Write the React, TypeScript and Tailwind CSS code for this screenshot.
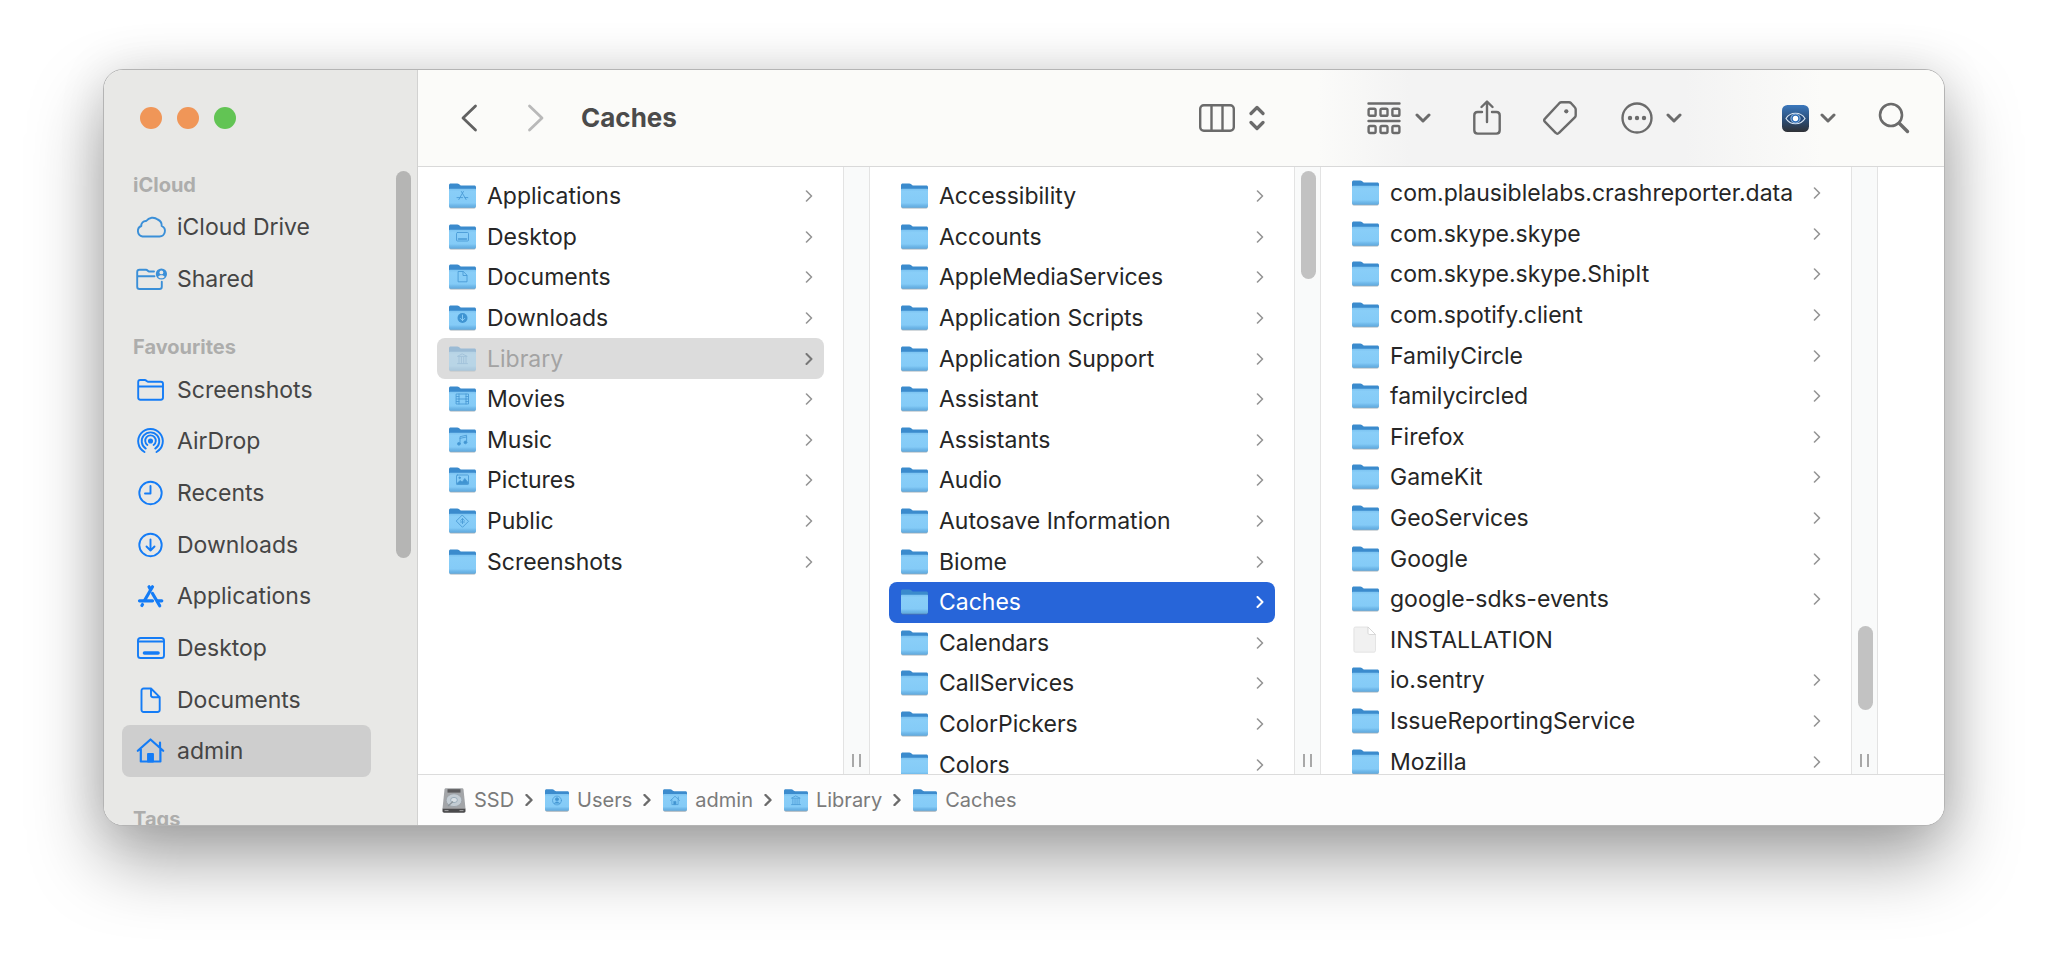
import type { ReactNode } from "react";

type Glyph =
  | "apps"
  | "desktop"
  | "document"
  | "download"
  | "library"
  | "movies"
  | "music"
  | "pictures"
  | "public"
  | "user"
  | "home";

type Entry = {
  name: string;
  glyph?: Glyph;
  kind?: "folder" | "file";
  state?: "parent" | "selected";
};

const homeEntries: Entry[] = [
  { name: "Applications", glyph: "apps" },
  { name: "Desktop", glyph: "desktop" },
  { name: "Documents", glyph: "document" },
  { name: "Downloads", glyph: "download" },
  { name: "Library", glyph: "library", state: "parent" },
  { name: "Movies", glyph: "movies" },
  { name: "Music", glyph: "music" },
  { name: "Pictures", glyph: "pictures" },
  { name: "Public", glyph: "public" },
  { name: "Screenshots" },
];

const libraryEntries: Entry[] = [
  { name: "Accessibility" },
  { name: "Accounts" },
  { name: "AppleMediaServices" },
  { name: "Application Scripts" },
  { name: "Application Support" },
  { name: "Assistant" },
  { name: "Assistants" },
  { name: "Audio" },
  { name: "Autosave Information" },
  { name: "Biome" },
  { name: "Caches", state: "selected" },
  { name: "Calendars" },
  { name: "CallServices" },
  { name: "ColorPickers" },
  { name: "Colors" },
];

const cacheEntries: Entry[] = [
  { name: "com.plausiblelabs.crashreporter.data" },
  { name: "com.skype.skype" },
  { name: "com.skype.skype.ShipIt" },
  { name: "com.spotify.client" },
  { name: "FamilyCircle" },
  { name: "familycircled" },
  { name: "Firefox" },
  { name: "GameKit" },
  { name: "GeoServices" },
  { name: "Google" },
  { name: "google-sdks-events" },
  { name: "INSTALLATION", kind: "file" },
  { name: "io.sentry" },
  { name: "IssueReportingService" },
  { name: "Mozilla" },
];

const pathEntries: { name: string; glyph?: Glyph; disk?: boolean }[] = [
  { name: "SSD", disk: true },
  { name: "Users", glyph: "user" },
  { name: "admin", glyph: "home" },
  { name: "Library", glyph: "library" },
  { name: "Caches" },
];

const glyphs: Record<Glyph, ReactNode> = {
  apps: <path d="M14.4 8.5 9.8 16.6M12.4 8.5l4.7 8.1M8 14.6h5.5M15.8 14.6h3" />,
  desktop: (
    <>
      <rect x="7.5" y="8.5" width="12" height="8.5" rx="1" />
      <path d="M9.5 15h8" strokeWidth="1.6" />
    </>
  ),
  document: <path d="M9.5 7.5h4.8l3.7 3.7v6.6H9.5zM14 7.8v3.7h3.8" />,
  download: (
    <>
      <circle cx="13.5" cy="13" r="5" fill="#3f94d2" stroke="none" />
      <path d="M13.5 10v5.5M11.3 13.4l2.2 2.2 2.2-2.2" stroke="#8fd0f8" />
    </>
  ),
  library: (
    <>
      <path d="M8.8 10.4h9.4L13.5 8zM8.5 17.6h10" />
      <path d="M10 11v6M12.4 11v6M14.7 11v6M17 11v6" />
    </>
  ),
  movies: (
    <path d="M7.5 8h12v10h-12zM10 8v10M17 8v10M10 13h7M7.5 10.5H10M7.5 13H10M7.5 15.5H10M17 10.5h2.5M17 13h2.5M17 15.5h2.5" />
  ),
  music: (
    <>
      <path d="M11 16.5V9.7l6.6-1.5v7M11 11.4l6.6-1.5" />
      <circle cx="9.9" cy="16.8" r="1.4" fill="#3f94d2" />
      <circle cx="16.4" cy="15.4" r="1.4" fill="#3f94d2" />
    </>
  ),
  pictures: (
    <>
      <rect x="7.5" y="8" width="12" height="9.5" rx="0.8" />
      <path d="m8 16.5 3.2-3 2 1.6 2.6-3.6 3.4 4.2v1.3H8z" fill="#3f94d2" />
      <circle cx="10.6" cy="10.8" r="0.8" fill="#3f94d2" />
    </>
  ),
  public: (
    <path d="m13.5 7.3 6 6-6 6-6-6zM13.5 10.6v5M11.8 12.4l1.7-1.8 1.7 1.8M11.6 14h3.8" />
  ),
  user: (
    <>
      <circle cx="13.5" cy="13" r="5" />
      <circle cx="13.5" cy="11.6" r="1.8" fill="#3f94d2" />
      <path d="M10.3 16.4c1.4-2.4 5-2.4 6.4 0" fill="#3f94d2" />
    </>
  ),
  home: (
    <>
      <path d="m8.4 13 5.1-4.8 5.1 4.8M10 12.4V17.6h7V12.4M17.2 9v2" />
      <path d="M12.4 14h2.2v3.6h-2.2z" fill="#3f94d2" />
    </>
  ),
};

function FolderIcon({ glyph, className = "h-[26px] w-[27px]" }: { glyph?: Glyph; className?: string }) {
  return (
    <svg viewBox="0 0 27 26" preserveAspectRatio="none" className={`${className} shrink-0`} aria-hidden="true">
      <defs>
        <linearGradient id="folder-front" x1="0" y1="0" x2="0" y2="1">
          <stop offset="0" stopColor="#7cc3f1" />
          <stop offset="0.15" stopColor="#89cef8" />
          <stop offset="0.75" stopColor="#84cbf7" />
          <stop offset="0.86" stopColor="#70b9ea" />
          <stop offset="1" stopColor="#60a9dd" />
        </linearGradient>
      </defs>
      <rect x="0.4" y="12" width="26.2" height="13.6" rx="1.6" fill="#6d7f8c" opacity="0.6" />
      <path d="M0 2.2C0 1 .7.4 1.8.4h6.4c.9 0 1.400.3 2 .8l.9.9c.4.4.8.5 1.500.5h12.600c1.200 0 1.800.6 1.800 1.800V12H0z" fill="#3b8bcd" />
      <path d="M0 6.600c0-.6.3-.9.9-.9h25.200c.6 0 .9.3.9.9v16.300c0 1-.7 1.800-1.800 1.800H1.800C.7 24.700 0 23.900 0 22.900z" fill="url(#folder-front)" />
      {glyph && (
        <g fill="none" stroke="#4a9bd6" strokeWidth="0.9" strokeLinecap="round" strokeLinejoin="round">
          {glyphs[glyph]}
        </g>
      )}
    </svg>
  );
}

function FileIcon() {
  return (
    <svg viewBox="0 0 27 28" className="h-7 w-[27px] shrink-0" aria-hidden="true">
      <path d="M3.500 1h12.500l7.500 7.500v16c0 1-.6 1.700-1.600 1.700H3.500c-1 0-1.600-.7-1.600-1.700V2.700C1.900 1.700 2.500 1 3.500 1z" fill="#f1f1f1" stroke="#dedede" strokeWidth="0.8" />
      <path d="M16 1v5.800c0 1.100.6 1.700 1.700 1.700h5.800z" fill="#fff" stroke="#cfcfcf" strokeWidth="0.8" />
    </svg>
  );
}

function DiskIcon() {
  return (
    <svg viewBox="0 0 24 25" className="h-[25px] w-6 shrink-0" aria-hidden="true">
      <path d="M2.500 1.500C2.700.6 3.200.3 4 .3h16c.8 0 1.300.3 1.500 1.200L23.500 20.500H.5z" fill="#a3a5a8" />
      <path d="M.5 20.500h23v2.800c0 .8-.6 1.400-1.600 1.400H2.100c-1 0-1.600-.6-1.600-1.400z" fill="#4a4a4c" />
      <rect x="5.500" y="1.200" width="13" height="3.400" fill="#5b5b5d" />
      <ellipse cx="12" cy="12.200" rx="7.800" ry="6.400" fill="#c3ccd3" stroke="#9aa1a7" strokeWidth="0.8" />
      <ellipse cx="12" cy="12" rx="3.400" ry="2.600" fill="#d9e0e5" stroke="#8fa3b3" strokeWidth="0.8" />
      <path d="m6 18 5-4.500" stroke="#8b949a" strokeWidth="1.200" />
      <path d="M2.500 22.600h4M17.500 22.600h4" stroke="#a4a4a6" strokeWidth="1" />
    </svg>
  );
}

function Chevron({ className }: { className: string }) {
  return (
    <svg viewBox="0 0 8 12" className={`h-3 w-2 shrink-0 ${className}`} fill="none" stroke="currentColor" strokeLinecap="round" strokeLinejoin="round" aria-hidden="true">
      <path d="M1.500 1 6.500 6l-5 5" />
    </svg>
  );
}

function DownChevron() {
  return (
    <svg viewBox="0 0 16 10" className="h-[10px] w-4" fill="none" stroke="currentColor" strokeWidth="3" strokeLinecap="round" strokeLinejoin="round" aria-hidden="true">
      <path d="m2 2 6 6 6-6" />
    </svg>
  );
}

function SidebarIcon({ color, children }: { color: string; children: ReactNode }) {
  return (
    <svg viewBox="0 0 32 28" className={`h-7 w-8 shrink-0 ${color}`} fill="none" stroke="currentColor" strokeWidth="1.9" strokeLinecap="round" strokeLinejoin="round" aria-hidden="true">
      {children}
    </svg>
  );
}

const cloudItems = [
  {
    name: "iCloud Drive",
    icon: <path d="M7.500 23.500h17a5.500 5.500 0 0 0 2.200-10.500 6.500 6.500 0 0 0-4-6.500 8 8 0 0 0-11.500 1.500 4.500 4.500 0 0 0-4.900 5 5.500 5.500 0 0 0 1.200 10.500z" />,
  },
  {
    name: "Shared",
    icon: (
      <>
        <path d="M19 6.500h-5c-1 0-1.500-1.800-3-1.800H4.500c-1.500 0-2.300.8-2.300 2.300v14.700c0 1.500.8 2.300 2.300 2.300h20c1.500 0 2.300-.8 2.300-2.300v-5M2.500 11.200h17" />
        <circle cx="26.400" cy="9" r="5.600" fill="currentColor" stroke="none" />
        <circle cx="26.400" cy="7.400" r="1.900" fill="#e8e8e6" stroke="none" />
        <path d="M23.100 12c.8-2.400 5.800-2.400 6.600 0-1.600 1.700-5 1.700-6.600 0z" fill="#e8e8e6" stroke="none" />
      </>
    ),
  },
];

const favouriteItems = [
  {
    name: "Screenshots",
    icon: <path d="M3.200 21.500V6c0-1.300.8-2 2-2h4.600c1.500 0 2.200 1.800 3.400 1.800h12.600c1.400 0 2.200.8 2.200 2.200v13.500c0 1.400-.8 2.200-2.200 2.200H5.400c-1.400 0-2.200-.8-2.200-2.200zM3.500 10.500h24.200" />,
  },
  {
    name: "AirDrop",
    icon: (
      <>
        <path d="M9.500 25a12.300 12.300 0 1 1 12 0M10.800 21.600a8.800 8.800 0 1 1 9.400 0M12.400 18a5.300 5.300 0 1 1 6.200 0" />
        <circle cx="15.500" cy="14" r="1.600" fill="currentColor" />
      </>
    ),
  },
  {
    name: "Recents",
    icon: (
      <>
        <circle cx="15.500" cy="14" r="11.200" />
        <path d="M15.500 7v7.500H10" />
      </>
    ),
  },
  {
    name: "Downloads",
    icon: (
      <>
        <circle cx="15.500" cy="14" r="11.200" />
        <path d="M15.500 8.500v11M11.500 15.500l4 4 4-4" />
      </>
    ),
  },
  {
    name: "Applications",
    icon: (
      <>
        <path d="M17.500 4.800 9.700 18.300M14 4.800l1.500 2.600M17.500 11.500l7.200 12.300" strokeWidth="3.200" />
        <path d="M4.500 18.800h13M22.500 18.800h4.300M7.500 22.500l-.6 1" strokeWidth="3.200" />
      </>
    ),
  },
  {
    name: "Desktop",
    icon: (
      <>
        <rect x="3" y="4" width="26" height="20" rx="2.600" />
        <path d="M3.500 7.500h25" />
        <path d="M9.500 19h13.500" strokeWidth="3.600" />
      </>
    ),
  },
  {
    name: "Documents",
    icon: <path d="M8.700 2.500H16l8.700 8.700v12.600c0 1.400-.8 2.200-2.200 2.200H8.700c-1.400 0-2.200-.8-2.200-2.200V4.700c0-1.400.8-2.200 2.200-2.200zM16 2.800v6.200c0 1.400.8 2.200 2.200 2.200h6.200" />,
  },
  {
    name: "admin",
    icon: (
      <>
        <path d="M2.800 13.800 15.500 2.500 28.200 13.800M5.800 12v12.500h19.600V12M25 5.500v5" strokeWidth="2.200" />
        <path d="M13 17h5v7.500h-5z" fill="currentColor" />
      </>
    ),
  },
];

function SidebarHeading({ children }: { children: ReactNode }) {
  return <h2 className="pl-[11px] text-[20px] leading-6 font-bold text-[#adadac]">{children}</h2>;
}

function SidebarItem({ name, icon, color, active }: { name: string; icon: ReactNode; color: string; active?: boolean }) {
  return (
    <li className="min-h-0">
      <a
        href="#"
        aria-current={active ? "page" : undefined}
        className={`flex h-full items-center gap-[10px] rounded-lg pl-[13px] text-[23px] leading-7 text-[#454545] ${active ? "bg-[#cecece]" : ""}`}
      >
        <SidebarIcon color={color}>{icon}</SidebarIcon>
        {name}
      </a>
    </li>
  );
}

function Sidebar() {
  return (
    <aside className="relative flex w-[314px] shrink-0 flex-col overflow-hidden border-r border-[#d2d2d1] bg-[#e8e8e6] pr-[46px] pl-[18px]">
      <div className="flex gap-[15px] pt-[37px] pl-[18px]">
        <button type="button" aria-label="Close" className="size-[22px] rounded-full bg-[#f09658]" />
        <button type="button" aria-label="Minimise" className="size-[22px] rounded-full bg-[#f09658]" />
        <button type="button" aria-label="Zoom" className="size-[22px] rounded-full bg-[#62c454]" />
      </div>
      <nav className="mt-11">
        <SidebarHeading>iCloud</SidebarHeading>
        <ul className="mt-1 grid h-[104px] auto-rows-fr">
          {cloudItems.map((item) => (
            <SidebarItem key={item.name} {...item} color="text-[#3a8fd8]" />
          ))}
        </ul>
        <div className="mt-[30px]">
          <SidebarHeading>Favourites</SidebarHeading>
        </div>
        <ul className="mt-[5px] grid h-[413px] auto-rows-fr">
          {favouriteItems.map((item) => (
            <SidebarItem key={item.name} {...item} color="text-[#147cf6]" active={item.name === "admin"} />
          ))}
        </ul>
        <div className="mt-[30px]">
          <SidebarHeading>Tags</SidebarHeading>
        </div>
      </nav>
      <div className="absolute top-[101px] right-[6px] h-[387px] w-[15px] rounded-full bg-[#b5b5b4]" />
    </aside>
  );
}

function Toolbar() {
  return (
    <header className="flex h-[97px] shrink-0 items-center border-b border-[#d9d9d9] bg-[linear-gradient(to_right,#fbfbf9_59%,#f3f3f3_65%,#f3f3f3_83%,#fbfbf9_92%)] pr-[34px] pl-[42px] text-[#6b6b6b]">
      <button type="button" aria-label="Back">
        <svg viewBox="0 0 18 28" className="h-7 w-[18px]" fill="none" stroke="#626262" strokeWidth="2.8" strokeLinecap="round" strokeLinejoin="round">
          <path d="M15.500 2 3 14l12.500 12" />
        </svg>
      </button>
      <button type="button" aria-label="Forward" className="ml-[49px]">
        <svg viewBox="0 0 18 28" className="h-7 w-[18px]" fill="none" stroke="#b9b9b9" strokeWidth="2.8" strokeLinecap="round" strokeLinejoin="round">
          <path d="M2.500 2 15 14 2.500 26" />
        </svg>
      </button>
      <h1 className="ml-9 text-[26px] leading-8 font-bold text-[#4b4b4b]">Caches</h1>

      <div className="ml-auto flex items-center gap-[42px]">
        <button type="button" aria-label="View as columns" className="mr-[60px] flex items-center gap-[14px]">
          <svg viewBox="0 0 36 28" className="h-7 w-9" fill="none" stroke="currentColor" strokeWidth="2.4">
            <rect x="1.200" y="1.200" width="33.600" height="25.600" rx="3.600" />
            <path d="M12.500 1v26M23.500 1v26" />
          </svg>
          <svg viewBox="0 0 16 26" className="h-[26px] w-4" fill="none" stroke="currentColor" strokeWidth="3.2" strokeLinecap="round" strokeLinejoin="round">
            <path d="m2 8.500 6-6 6 6M2 17.500l6 6 6-6" />
          </svg>
        </button>
        <button type="button" aria-label="Group" className="flex items-center gap-[14px]">
          <svg viewBox="0 0 34 34" className="size-[34px]" fill="none" stroke="currentColor" strokeWidth="2.4" strokeLinecap="round">
            <path d="M1.500 2.500h31M1.500 20h31" />
            <rect x="1.600" y="7.800" width="7" height="7" rx="1.400" />
            <rect x="13.500" y="7.800" width="7" height="7" rx="1.400" />
            <rect x="25.400" y="7.800" width="7" height="7" rx="1.400" />
            <rect x="1.600" y="25" width="7" height="7" rx="1.400" />
            <rect x="13.500" y="25" width="7" height="7" rx="1.400" />
            <rect x="25.400" y="25" width="7" height="7" rx="1.400" />
          </svg>
          <DownChevron />
        </button>
        <button type="button" aria-label="Share">
          <svg viewBox="0 0 28 36" className="h-9 w-7" fill="none" stroke="currentColor" strokeWidth="2.4" strokeLinecap="round" strokeLinejoin="round">
            <path d="M9 12H4.600c-2.200 0-3.300 1.100-3.300 3.300v15c0 2.200 1.100 3.300 3.300 3.300h18.800c2.200 0 3.300-1.100 3.300-3.300v-15c0-2.200-1.100-3.300-3.300-3.300H19M14 22V1.800M8.500 7 14 1.500 19.500 7" />
          </svg>
        </button>
        <button type="button" aria-label="Tags" className="mr-[2px]">
          <svg viewBox="0 0 34 34" className="size-[34px]" fill="none" stroke="currentColor" strokeWidth="2.4" strokeLinejoin="round">
            <path d="M18.500 1.300h7.400c.9 0 1.600.3 2.200.9l3.700 4.100c.6.600.9 1.300.9 2.200v5.700c0 .9-.3 1.600-.9 2.200L16 31.800c-1.100 1.200-2.200 1.200-3.300 0L2 20.900c-1.100-1.100-1.100-2.200 0-3.300L16.300 2.200c.6-.6 1.300-.9 2.200-.9z" />
            <circle cx="23.300" cy="10.300" r="2.100" fill="currentColor" stroke="none" />
          </svg>
        </button>
        <button type="button" aria-label="More" className="flex items-center gap-[13px]">
          <svg viewBox="0 0 32 32" className="size-8" fill="none" stroke="currentColor" strokeWidth="2.4">
            <circle cx="16" cy="16" r="14.500" />
            <g fill="currentColor" stroke="none">
              <circle cx="9" cy="16" r="2.200" />
              <circle cx="16" cy="16" r="2.200" />
              <circle cx="23" cy="16" r="2.200" />
            </g>
          </svg>
          <DownChevron />
        </button>
        <button type="button" aria-label="Preview app" className="ml-[58px] flex items-center gap-[11px]">
          <svg viewBox="0 0 27 27" className="size-[27px]" aria-hidden="true">
            <defs>
              <linearGradient id="eye-bg" x1="0" y1="0" x2="0" y2="1">
                <stop offset="0" stopColor="#3b78bd" />
                <stop offset="0.55" stopColor="#2b4e77" />
                <stop offset="1" stopColor="#303236" />
              </linearGradient>
            </defs>
            <rect width="27" height="27" rx="5.500" fill="url(#eye-bg)" />
            <path d="M4 13.500c4.200-7 14.800-7 19 0-4.200 7-14.800 7-19 0z" fill="#254c7c" stroke="#d5e2f0" strokeWidth="1.2" />
            <circle cx="13.500" cy="13.500" r="4.600" fill="#2b6cb5" stroke="#a9cbee" strokeWidth="0.9" />
            <circle cx="13.500" cy="13.500" r="2.700" fill="#fff" />
          </svg>
          <DownChevron />
        </button>
        <button type="button" aria-label="Search">
          <svg viewBox="0 0 32 32" className="size-8" fill="none" stroke="currentColor" strokeLinecap="round">
            <circle cx="13" cy="13" r="11" strokeWidth="2.6" />
            <path d="m21.500 21.500 8 8" strokeWidth="3.4" />
          </svg>
        </button>
      </div>
    </header>
  );
}

function EntryRow({ entry }: { entry: Entry }) {
  const { name, glyph, kind = "folder", state } = entry;
  let rowStyle = "text-[#262626]";
  if (state === "parent") rowStyle = "bg-[#dcdcdc] text-[#a3a3a3]";
  if (state === "selected") rowStyle = "bg-[#2765d9] text-white";

  let chevronStyle = "stroke-[1.6] text-[#949494]";
  if (state === "parent") chevronStyle = "stroke-2 text-[#777777]";
  if (state === "selected") chevronStyle = "stroke-2 text-white";

  return (
    <li className="min-h-0">
      <a href="#" className={`flex h-full items-center rounded-lg pr-[11px] pl-3 text-[23px] leading-7 ${rowStyle}`}>
        {kind === "file" ? (
          <FileIcon />
        ) : (
          <FolderIcon glyph={glyph} className={state === "parent" ? "h-[26px] w-[27px] opacity-40" : "h-[26px] w-[27px]"} />
        )}
        <span className="ml-[11px] flex-1 whitespace-nowrap">{name}</span>
        {kind === "folder" && <Chevron className={chevronStyle} />}
      </a>
    </li>
  );
}

function Column({ entries, size, thumb }: { entries: Entry[]; size: string; thumb?: string }) {
  return (
    <>
      <ul className={`grid shrink-0 grid-rows-15 px-[19px] ${size}`}>
        {entries.map((entry) => (
          <EntryRow key={entry.name} entry={entry} />
        ))}
      </ul>
      <div className="relative flex w-[27px] shrink-0 items-end justify-center gap-[5px] border-x border-[#e3e3e3] bg-[#f9fafa] pb-[7px]">
        {thumb && <div className={`absolute left-[6px] w-[15px] rounded-full bg-[#c2c2c2] ${thumb}`} />}
        <span className="h-[13px] w-[2px] bg-[#a8a8a8]" />
        <span className="h-[13px] w-[2px] bg-[#a8a8a8]" />
      </div>
    </>
  );
}

function PathBar() {
  return (
    <footer className="flex h-[51px] shrink-0 items-center border-t border-[#dcdcdc] bg-[#fdfdfd] pl-6 text-[20px] leading-6 text-[#7b7b7b]">
      {pathEntries.map((entry, index) => (
        <div key={entry.name} className="flex items-center">
          {index > 0 && <Chevron className="mr-3 ml-[11px] stroke-[2.4] text-[#6b6b6b]" />}
          {entry.disk ? <DiskIcon /> : <FolderIcon glyph={entry.glyph} className="h-[23px] w-6" />}
          <span className="ml-2">{entry.name}</span>
        </div>
      ))}
    </footer>
  );
}

export default function App() {
  return (
    <main className="flex h-screen overflow-hidden bg-white px-[103px] pt-[69px] pb-[136px] font-['Inter','Liberation_Sans',sans-serif]">
      <div className="flex min-w-0 flex-1 overflow-hidden rounded-[20px] border border-[#b4b4b4] bg-white shadow-[0_34px_72px_rgba(0,0,0,0.36),0_0_48px_rgba(0,0,0,0.1)]">
        <Sidebar />
        <div className="flex min-w-0 flex-1 flex-col">
          <Toolbar />
          <div className="flex min-h-0 flex-1 overflow-hidden">
            <Column entries={homeEntries} size="h-[618px] w-[425px] pt-[9px]" />
            <Column entries={libraryEntries} size="h-[618px] w-[424px] pt-[9px]" thumb="top-[4px] h-[108px]" />
            <Column entries={cacheEntries} size="h-[615px] w-[530px] pt-[6px]" thumb="top-[459px] h-[84px]" />
            <div className="flex-1 bg-white" />
          </div>
          <PathBar />
        </div>
      </div>
    </main>
  );
}
